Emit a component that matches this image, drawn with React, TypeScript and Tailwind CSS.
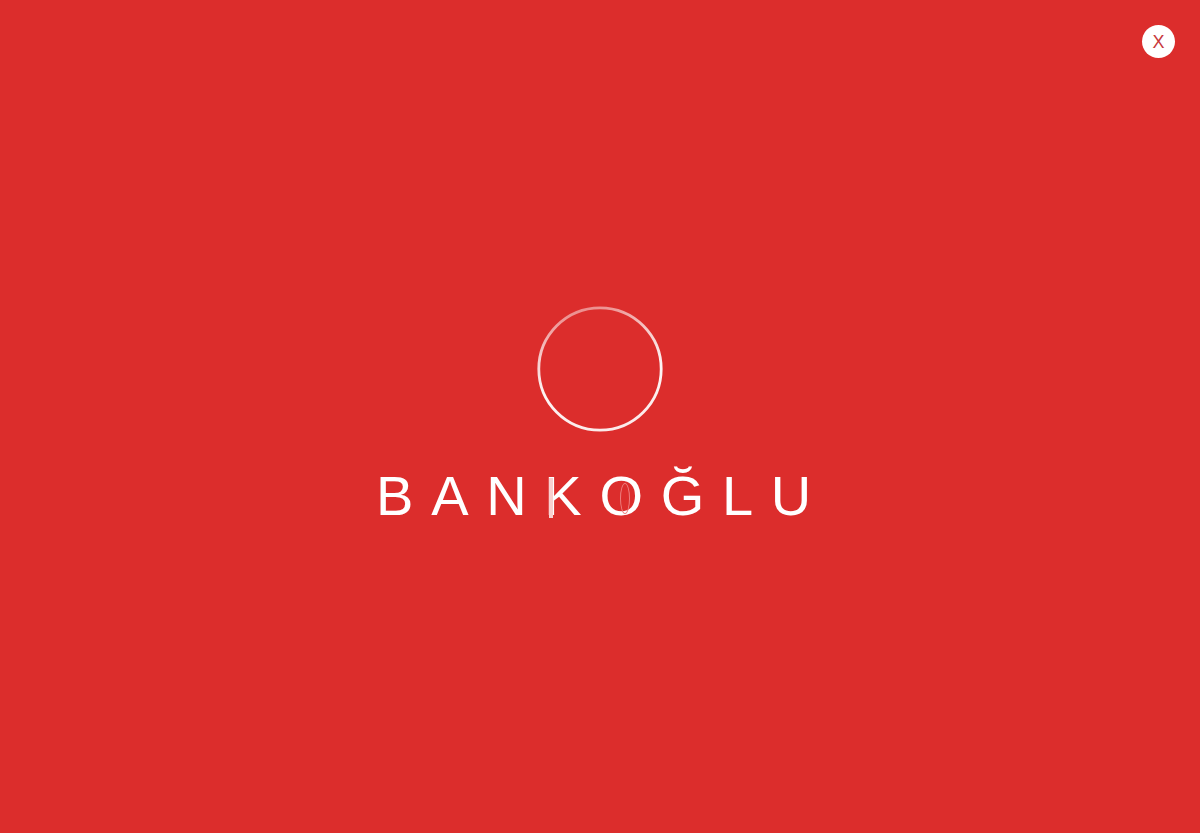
export default function App() {
  return (
    <div className="relative flex h-[833px] w-full flex-col items-center justify-center overflow-hidden bg-[#dc2d2c] font-['Liberation_Sans',Arial,sans-serif]">
      <button className="absolute right-[25px] top-[25px] flex h-[33px] w-[33px] items-center justify-center rounded-full bg-white text-[18px] leading-none text-[#c8383c]">
        X
      </button>
      <svg width="126" height="126" viewBox="0 0 126 126" className="block" aria-hidden="true">
        <defs>
          <linearGradient id="ring" x1="0.35" y1="0" x2="0.6" y2="1">
            <stop offset="0" stopColor="#ffffff" stopOpacity="0.45" />
            <stop offset="0.3" stopColor="#ffffff" stopOpacity="0.75" />
            <stop offset="0.6" stopColor="#ffffff" stopOpacity="0.95" />
            <stop offset="1" stopColor="#ffffff" stopOpacity="0.9" />
          </linearGradient>
        </defs>
        <circle cx="63" cy="63" r="61.2" fill="none" stroke="url(#ring)" strokeWidth="2.8" />
      </svg>
      <div className="relative ml-[5px] mt-[31px] whitespace-nowrap text-[56px] leading-[65px] tracking-[17.7px] text-white">
        BANKOĞLU
        <span className="absolute left-[173px] top-[15px] h-[40px] w-[4px] bg-[#f9d0d0]" />
        <span className="absolute left-[244px] top-[20px] h-[31px] w-[10px] rounded-[50%] border border-[#ec7f7f]" />
      </div>
    </div>
  );
}
